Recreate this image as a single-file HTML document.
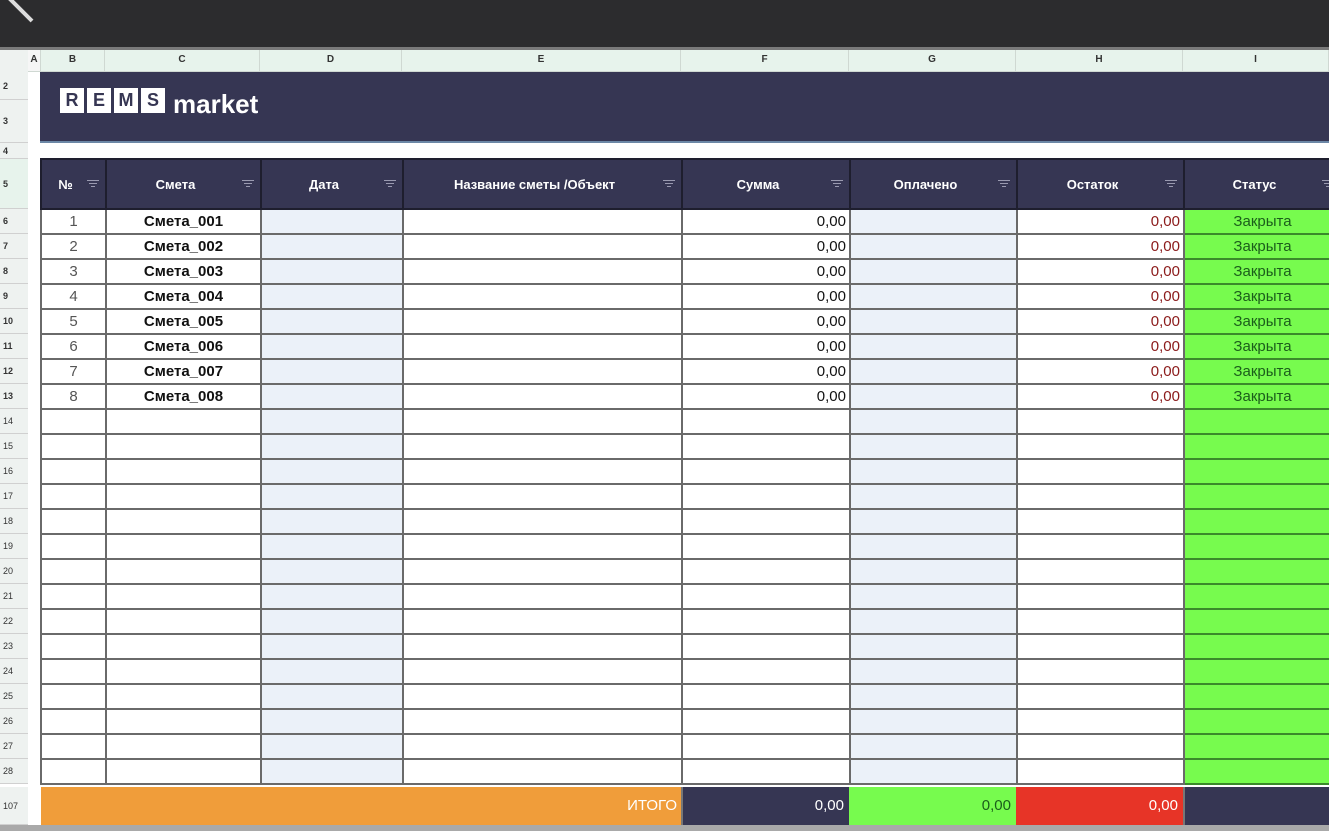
<!DOCTYPE html>
<html><head><meta charset="utf-8"><style>
*{margin:0;padding:0;box-sizing:border-box}
body{width:1329px;height:831px;overflow:hidden;background:#fff;font-family:"Liberation Sans",sans-serif;position:relative}
.a{position:absolute}
.top{left:0;top:0;width:1329px;height:47px;background:#2c2c2e}
.gl{left:0;top:47px;width:1329px;height:3px;background:#7a7a7a}
.ch{top:50px;height:22px;background:#e7f3ec;border-right:1px solid #cfd8d2;font-size:10px;font-weight:bold;color:#333;text-align:center;line-height:20px;border-bottom:1px solid #cfd8d2}
.rh{left:0;width:28px;background:#eef2f0;font-size:9px;font-weight:bold;color:#333;padding-left:3px;border-bottom:1px solid #d0d0d0}
table{position:absolute;left:40px;top:158px;border-collapse:collapse;table-layout:fixed;width:1300px}
td{border:2px solid #6a6a6a;height:25px;font-size:15px;text-align:center;padding:0 3px;white-space:nowrap;overflow:hidden}
th{background:#363653;color:#fff;font-size:13px;font-weight:bold;height:50px;border:2px solid #1e1e2e;position:relative;padding-right:16px}
th i{position:absolute;right:6px;top:20px;width:12px;height:8px;border-top:1.5px solid #9a9ab0}
th i:before{content:"";position:absolute;left:2px;right:2px;top:2px;border-top:1.5px solid #9a9ab0}
th i:after{content:"";position:absolute;left:4px;right:4px;top:5px;border-top:1.5px solid #9a9ab0}
.n{color:#555}
.c{font-weight:bold;color:#111}
.d{background:#ebf1f9}
.r{text-align:right;color:#111}
.o{text-align:right;color:#8b1a1a}
.s{background:#77fb4e;color:#1b5e1b;border-color:#3a8a2a}
.logo span{display:inline-block;width:24px;height:25px;background:#fff;color:#363653;font-weight:bold;font-size:18px;text-align:center;line-height:25px;margin-right:3px}
</style></head><body>
<div class="a top"><div class="a" style="left:18px;top:-8px;width:4px;height:34px;background:#ddd;transform:rotate(-45deg)"></div></div>
<div class="a gl"></div>
<div class="a" style="left:0;top:50px;width:28px;height:22px;background:#eef2f0"></div>
<div class="a ch" style="left:28px;width:13px;background:#f6f6f6">A</div>
<div class="a ch" style="left:41px;width:64px">B</div>
<div class="a ch" style="left:105px;width:155px">C</div>
<div class="a ch" style="left:260px;width:142px">D</div>
<div class="a ch" style="left:402px;width:279px">E</div>
<div class="a ch" style="left:681px;width:168px">F</div>
<div class="a ch" style="left:849px;width:167px">G</div>
<div class="a ch" style="left:1016px;width:167px">H</div>
<div class="a ch" style="left:1183px;width:146px">I</div>
<div class="a rh" style="top:72px;height:28px;line-height:28px">2</div>
<div class="a rh" style="top:100px;height:43px;line-height:43px">3</div>
<div class="a rh" style="top:143px;height:16px;line-height:16px">4</div>
<div class="a rh" style="top:159px;height:50px;line-height:50px;background:#e7f3ec">5</div>
<div class="a" style="left:40px;top:72px;width:1289px;height:71px;background:#363653;border-bottom:2px solid #6c87a6"></div>
<div class="a logo" style="left:60px;top:88px"><span>R</span><span>E</span><span>M</span><span>S</span></div>
<div class="a" style="left:173px;top:88px;color:#fff;font-size:26px;font-weight:bold;line-height:32px">market</div>
<div id="rh"></div>
<table>
<colgroup><col style="width:65px"><col style="width:155px"><col style="width:142px"><col style="width:279px"><col style="width:168px"><col style="width:167px"><col style="width:167px"><col style="width:157px"></colgroup>
<tr><th>№<i></i></th><th>Смета<i></i></th><th>Дата<i></i></th><th>Название сметы /Объект<i></i></th><th>Сумма<i></i></th><th>Оплачено<i></i></th><th>Остаток<i></i></th><th>Статус<i></i></th></tr>
<tbody id="tb"></tbody>
</table>
<div class="a" style="left:41px;top:787px;width:640px;height:38px;background:#f09d3a;color:#fff;font-size:15px;text-align:right;line-height:38px;padding-right:4px">ИТОГО</div>
<div class="a" style="left:681px;top:787px;width:168px;height:38px;background:#363653;color:#fff;font-size:15px;text-align:right;line-height:38px;padding-right:5px;border-left:2px solid #777">0,00</div>
<div class="a" style="left:849px;top:787px;width:167px;height:38px;background:#77fb4e;color:#1b5e1b;font-size:15px;text-align:right;line-height:38px;padding-right:5px">0,00</div>
<div class="a" style="left:1016px;top:787px;width:167px;height:38px;background:#e73427;color:#fff;font-size:15px;text-align:right;line-height:38px;padding-right:5px">0,00</div>
<div class="a" style="left:1183px;top:787px;width:146px;height:38px;background:#363653;border-left:2px solid #777"></div>
<div class="a rh" style="top:787px;height:38px;line-height:38px;font-weight:normal">107</div>
<div class="a" style="left:0;top:825px;width:1329px;height:6px;background:#a9a9a9"></div>
<script>
var tb=document.getElementById('tb'),h='',r='';
for(var i=1;i<=23;i++){
 if(i<=8){h+='<tr><td class="n">'+i+'</td><td class="c">Смета_00'+i+'</td><td class="d"></td><td></td><td class="r">0,00</td><td class="d"></td><td class="o">0,00</td><td class="s">Закрыта</td></tr>';}
 else{h+='<tr><td></td><td></td><td class="d"></td><td></td><td></td><td class="d"></td><td></td><td class="s"></td></tr>';}
 r+='<div class="a rh" style="top:'+(209+(i-1)*25)+'px;height:25px;line-height:25px;'+(i<=8?'':'font-weight:normal')+'">'+(i+5)+'</div>';
}
tb.innerHTML=h;document.getElementById('rh').innerHTML=r;
</script>
</body></html>
